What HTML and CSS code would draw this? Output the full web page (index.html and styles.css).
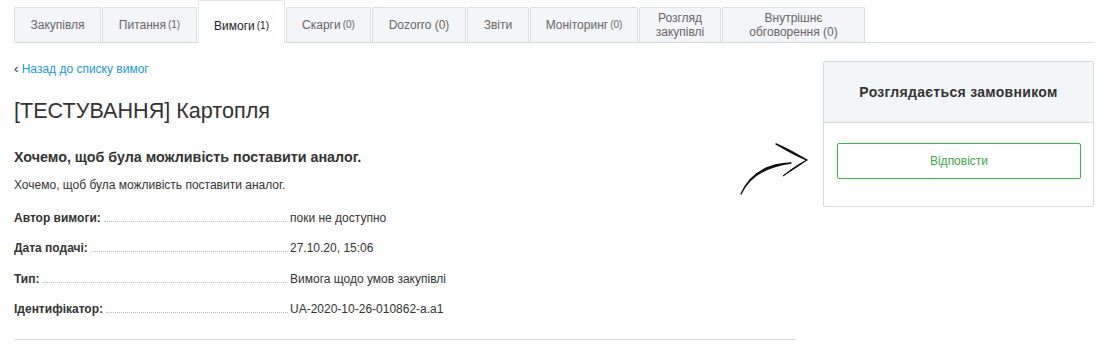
FILE: index.html
```html
<!DOCTYPE html>
<html lang="uk">
<head>
<meta charset="utf-8">
<link rel="stylesheet" href="styles.css">
</head>
<body>
<div class="page">
  <nav class="tabs">
    <a class="tab t1">Закупівля</a>
    <a class="tab t2">Питання <small>(1)</small></a>
    <a class="tab t3 active">Вимоги <small>(1)</small></a>
    <a class="tab t4">Скарги <small>(0)</small></a>
    <a class="tab t5">Dozorro (0)</a>
    <a class="tab t6">Звіти</a>
    <a class="tab t7">Моніторинг <small>(0)</small></a>
    <a class="tab t8">Розгляд<br>закупівлі</a>
    <a class="tab t9">Внутрішнє<br>обговорення (0)</a>
  </nav>

  <div class="content">
    <main class="main">
      <a class="back"><span class="chev">‹</span> Назад до списку вимог</a>
      <h1 class="title">[ТЕСТУВАННЯ] Картопля</h1>
      <h2 class="subject">Хочемо, щоб була можливість поставити аналог.</h2>
      <p class="desc">Хочемо, щоб була можливість поставити аналог.</p>
      <dl class="info">
        <div class="row"><dt>Автор вимоги:</dt><dd>поки не доступно</dd></div>
        <div class="row"><dt>Дата подачі:</dt><dd>27.10.20, 15:06</dd></div>
        <div class="row"><dt>Тип:</dt><dd>Вимога щодо умов закупівлі</dd></div>
        <div class="row"><dt>Ідентифікатор:</dt><dd>UA-2020-10-26-010862-a.a1</dd></div>
      </dl>
    </main>

    <aside class="side">
      <div class="panel">
        <div class="panel-head">Розглядається замовником</div>
        <div class="panel-body">
          <button class="btn">Відповісти</button>
        </div>
      </div>
    </aside>

    <svg class="arrow" width="80" height="60" viewBox="0 0 80 60" aria-hidden="true">
      <path d="M1 53 C 8 38, 22 26, 51 22 C 24 23, 9 35, 1 53 Z" fill="#111" stroke="#111" stroke-width="1.3" stroke-linejoin="round"/>
      <path d="M36 3 C 46 9, 56 15, 67 19 C 56 13, 46 7, 36 3 Z" fill="#111" stroke="#111" stroke-width="1.4" stroke-linejoin="round"/>
      <path d="M67 19 C 60 24, 52 29, 43 35 C 53 27, 59 23, 67 19 Z" fill="#111" stroke="#111" stroke-width="1" stroke-linejoin="round"/>
    </svg>
  </div>
</div>
</body>
</html>
```

FILE: styles.css
```css
* { box-sizing: border-box; }

html, body {
  margin: 0;
  background: #fff;
}

body {
  font-family: "Liberation Sans", Arial, sans-serif;
  color: #333;
  font-size: 12px;
}

.page {
  width: 1080px;
  margin-left: 14px;
}

/* Tabs */
.tabs {
  display: flex;
  align-items: flex-end;
  height: 43px;
  border-bottom: 1px solid #d7dbe2;
}

.tab {
  display: flex;
  align-items: center;
  justify-content: center;
  text-align: center;
  height: 35px;
  margin-right: 1px;
  background: #f3f5f8;
  border: 1px solid #d9dee5;
  border-bottom: none;
  border-radius: 2px 2px 0 0;
  color: #666;
  font-size: 12px;
  line-height: 14px;
  white-space: nowrap;
}

.tab small {
  font-size: 10px;
  margin-left: 2px;
}

.tab.active {
  height: 43px;
  margin-bottom: -1px;
  padding-top: 7px;
  background: #fff;
  border-color: #e3e6ea;
  color: #222;
}

.t1 { width: 87px; }
.t2 { width: 95px; }
.t3 { width: 87px; }
.t4 { width: 85px; }
.t5 { width: 94px; }
.t6 { width: 62px; }
.t7 { width: 108px; }
.t8 { width: 82px; }
.t9 { width: 143px; }

/* Content */
.content {
  position: relative;
  display: flex;
  justify-content: space-between;
  align-items: flex-start;
}

.main {
  width: 782px;
  padding-top: 19px;
  border-bottom: 1px solid #d7d9de;
  padding-bottom: 16px;
}

.back {
  display: block;
  color: #1b9ad6;
  font-size: 12px;
  line-height: 14px;
  text-decoration: none;
}

.back .chev {
  color: #333;
  font-size: 13px;
}

.title {
  margin: 22px 0 0;
  font-size: 21.6px;
  font-weight: normal;
  line-height: 26px;
  color: #333;
}

.subject {
  margin: 24px 0 0;
  font-size: 14.3px;
  font-weight: bold;
  line-height: 18px;
  color: #333;
}

.desc {
  margin: 11px 0 0;
  font-size: 12px;
  line-height: 16px;
}

.info {
  margin: 17px 0 0;
}

.row {
  display: flex;
  align-items: baseline;
  height: 30px;
  line-height: 16px;
}

.row:nth-child(2) { height: 31px; }
.row:last-child { height: 22px; }

.row dt {
  display: flex;
  align-items: baseline;
  width: 274px;
  font-weight: bold;
  white-space: nowrap;
}

.row dt::after {
  content: "";
  flex: 1;
  margin-left: 3px;
  border-bottom: 1px dotted #bcbcbc;
}

.row dd {
  margin: 0;
  padding-left: 2px;
}

/* Side panel */
.side {
  width: 271px;
  margin-top: 18px;
}

.panel {
  border: 1px solid #d5dae1;
  border-radius: 2px;
}

.panel-head {
  height: 61px;
  background: #f3f6f9;
  border-bottom: 1px solid #d5dae1;
  display: flex;
  align-items: center;
  justify-content: center;
  font-weight: bold;
  font-size: 14px;
  letter-spacing: 0.3px;
  color: #333;
}

.panel-body {
  padding: 20px 12px 27px 13px;
}

.btn {
  display: block;
  width: 100%;
  height: 36px;
  background: #fff;
  border: 1px solid #39b54a;
  border-radius: 2px;
  color: #3aa845;
  font-family: inherit;
  font-size: 12px;
}

.arrow {
  position: absolute;
  left: 726px;
  top: 98px;
}
```
